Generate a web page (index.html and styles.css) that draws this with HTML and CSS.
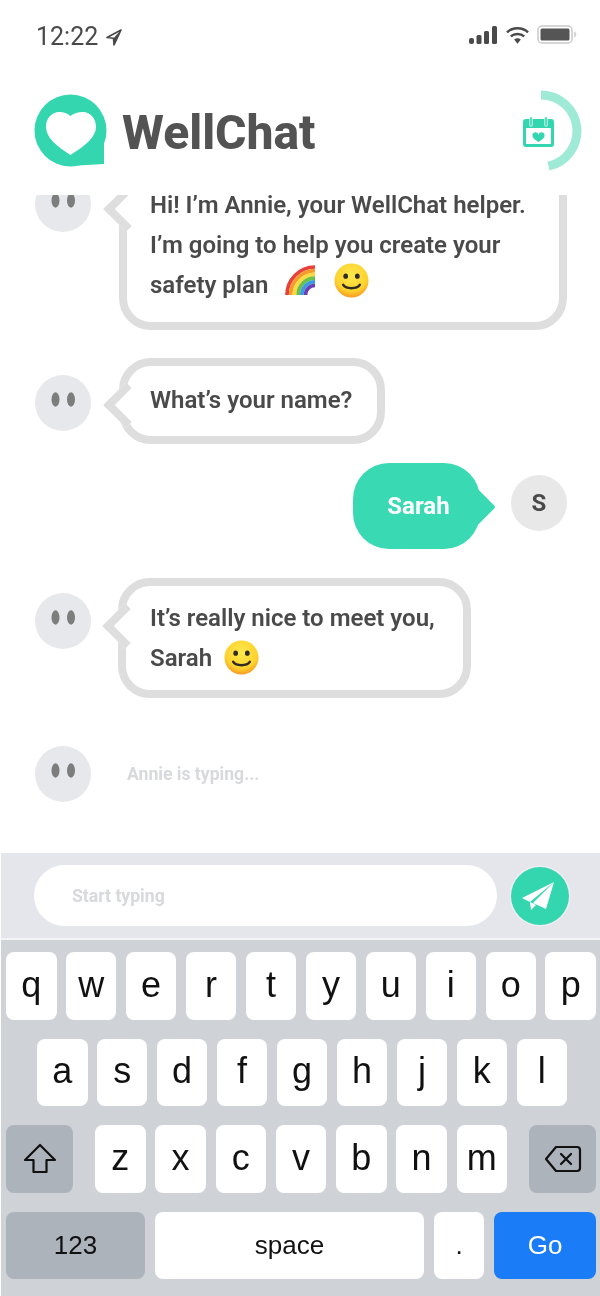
FILE: index.html
```html
<!DOCTYPE html>
<html lang="en">
<head>
<meta charset="utf-8">
<title>WellChat</title>
<link rel="stylesheet" href="styles.css">
</head>
<body>
<svg class="defs" width="0" height="0" aria-hidden="true">
  <defs>
    <radialGradient id="sg" cx="50%" cy="35%" r="65%">
      <stop offset="0" stop-color="#ffe94d"/><stop offset=".72" stop-color="#fdd22e"/><stop offset="1" stop-color="#f79a22"/>
    </radialGradient>
    <symbol id="smile" viewBox="0 0 36 36">
      <circle cx="18" cy="18" r="17.5" fill="url(#sg)"/>
      <ellipse cx="12" cy="13.5" rx="2.4" ry="2.8" fill="#2f2a22"/>
      <ellipse cx="24" cy="13.5" rx="2.4" ry="2.8" fill="#2f2a22"/>
      <path d="M9.5 22.5c3 4.500 14 4.500 17 0" fill="none" stroke="#2f2a22" stroke-width="2.600" stroke-linecap="round"/>
    </symbol>
    <symbol id="eyes" viewBox="0 0 56 56">
      <ellipse cx="20.500" cy="24.500" rx="4" ry="7.200" fill="#7d7d7d"/>
      <ellipse cx="36" cy="24.500" rx="4" ry="7.200" fill="#7d7d7d"/>
    </symbol>
  </defs>
</svg>
<main class="screen">
  <div class="status">
    <div class="time">
      <span>12:22</span>
      <svg class="loc" width="16" height="17" viewBox="0 0 16 17"><path d="M15 1 1 8.500l6.500.7L8 16z" fill="#fff" stroke="#4a4a4a" stroke-width="1.600" stroke-linejoin="round"/><path d="M15 1 7.500 9.200 8 16z" fill="#4a4a4a"/></svg>
    </div>
    <div class="status-icons">
      <svg width="28" height="18" viewBox="0 0 28 18"><g fill="#4a4a4a"><rect x="0" y="12" width="5" height="6" rx="2"/><rect x="7.500" y="9" width="5" height="9" rx="1.500"/><rect x="15" y="5" width="5" height="13" rx="1.500"/><rect x="23" y="0" width="5" height="18" rx="1.500"/></g></svg>
      <svg width="23" height="18" viewBox="0 0 24 18"><g fill="none" stroke="#4a4a4a" stroke-width="2.600"><path d="M1 6.200c6-5.600 16-5.600 22 0"/><path d="M5 10.400c3.800-3.300 10.200-3.300 14 0"/></g><path d="M8.500 13.600c2-1.500 5-1.500 7 0L12 18z" fill="#4a4a4a"/></svg>
      <svg width="40" height="19" viewBox="0 0 40 19"><rect x="1" y="1" width="34" height="17" rx="4" fill="none" stroke="#c9c9c9" stroke-width="1.500"/><rect x="3.500" y="3.500" width="29" height="12" rx="1.500" fill="#555"/><path d="M37 6.500c1.500.4 2.300 1.500 2.300 3s-.8 2.600-2.300 3z" fill="#d5d5d5"/></svg>
    </div>
  </div>

  <header class="brand">
    <div class="brand-left">
      <svg class="logo" width="74" height="74" viewBox="0 0 74 74">
        <circle cx="36.500" cy="36.500" r="36" fill="#34d6b0"/>
        <path d="M44 71.500 70 70V48z" fill="#34d6b0"/>
        <path d="M36.500 22c-3-2.500-7-4-11-4C17 18 12 25 12 33c0 10 10 19 24.500 28C51 52 62 43 62 33c0-8-5-15-13.500-15-4 0-9 1.500-12 4z" fill="#fff"/>
      </svg>
      <h1 class="title">WellChat</h1>
    </div>
    <svg class="progress" width="62" height="90" viewBox="0 0 62 90">
      <path d="M21 7a36 36 0 0 1 7.500 71.200" fill="none" stroke="#9eead6" stroke-width="9"/>
      <rect x="3" y="31" width="31" height="28" rx="3" fill="#34d6b0"/>
      <rect x="6" y="40" width="25" height="16" fill="#fff"/>
      <path d="M11 30v7M26 30v7" stroke="#c8f3e7" stroke-width="3.500" stroke-linecap="round"/>
      <path d="M11 30v7M26 30v7" stroke="#34d6b0" stroke-width="1.500" stroke-linecap="round"/>
      <path d="M18.500 54c-3-2-6-3.800-6-6.300a3 3 0 0 1 6-1 3 3 0 0 1 6 1c0 2.500-3 4.300-6 6.300z" fill="#34d6b0"/>
    </svg>
  </header>

  <section class="chat">
    <div class="log">
      <div class="row row-first">
        <div class="avatar"><svg width="56" height="56"><use href="#eyes"/></svg></div>
        <div class="bubble bubble-wide">
          Hi! I’m Annie, your WellChat helper.<br>
          I’m going to help you create your<br>
          safety plan
          <svg class="rainbow" width="30" height="31" viewBox="0 0 30 31">
            <g fill="none" stroke-width="3.700">
              <circle cx="30" cy="31" r="28" stroke="#e8403a" />
              <circle cx="30" cy="31" r="24.300" stroke="#f59a2c"/>
              <circle cx="30" cy="31" r="20.600" stroke="#fbd93f"/>
              <circle cx="30" cy="31" r="16.900" stroke="#6cc04a"/>
              <circle cx="30" cy="31" r="13.200" stroke="#3a9be0"/>
              <circle cx="30" cy="31" r="9.500" stroke="#6a3fb5"/>
            </g>
          </svg>
          <svg class="emoji emoji-after" width="35" height="35"><use href="#smile"/></svg>
        </div>
      </div>

      <div class="row row-name">
        <div class="avatar"><svg width="56" height="56"><use href="#eyes"/></svg></div>
        <div class="bubble bubble-short">What’s your name?</div>
      </div>

      <div class="row row-me">
        <div class="bubble-me">Sarah</div>
        <div class="avatar avatar-me">S</div>
      </div>

      <div class="row row-nice">
        <div class="avatar"><svg width="56" height="56"><use href="#eyes"/></svg></div>
        <div class="bubble bubble-nice">
          It’s really nice to meet you,<br>
          Sarah <svg class="emoji" width="35" height="35"><use href="#smile"/></svg>
        </div>
      </div>

      <div class="row row-typing">
        <div class="avatar"><svg width="56" height="56"><use href="#eyes"/></svg></div>
        <div class="typing">Annie is typing...</div>
      </div>
    </div>
  </section>

  <div class="composer">
    <div class="input">Start typing</div>
    <div class="send">
      <svg width="58" height="58" viewBox="0 0 58 58">
        <path d="M43 15 11 31l8 4z" fill="#fff"/>
        <path d="M43 15 22 36l13 6z" fill="#fff"/>
        <path d="M19 35l6 3-5 5z" fill="#fff"/>
      </svg>
    </div>
  </div>

  <div class="keyboard">
    <div class="keys keys-top">
      <div class="key">q</div><div class="key">w</div><div class="key">e</div><div class="key">r</div><div class="key">t</div><div class="key">y</div><div class="key">u</div><div class="key">i</div><div class="key">o</div><div class="key">p</div>
    </div>
    <div class="keys keys-mid">
      <div class="key">a</div><div class="key">s</div><div class="key">d</div><div class="key">f</div><div class="key">g</div><div class="key">h</div><div class="key">j</div><div class="key">k</div><div class="key">l</div>
    </div>
    <div class="keys keys-low">
      <div class="key key-dark key-shift">
        <svg width="34" height="32" viewBox="0 0 34 32"><path d="M17 2 2 17h8.500v12h13V17H32z" fill="none" stroke="#111" stroke-width="2.200" stroke-linejoin="round"/></svg>
      </div>
      <div class="letters">
        <div class="key">z</div><div class="key">x</div><div class="key">c</div><div class="key">v</div><div class="key">b</div><div class="key">n</div><div class="key">m</div>
      </div>
      <div class="key key-dark key-shift">
        <svg width="38" height="28" viewBox="0 0 38 28"><path d="M12 2h21a3 3 0 0 1 3 3v18a3 3 0 0 1-3 3H12L2 14z" fill="none" stroke="#111" stroke-width="2.200" stroke-linejoin="round"/><path d="M17 9l10 10M27 9 17 19" stroke="#111" stroke-width="2.200" stroke-linecap="round"/></svg>
      </div>
    </div>
    <div class="keys keys-bottom">
      <div class="key key-dark key-num">123</div>
      <div class="key key-space">space</div>
      <div class="key key-dot">.</div>
      <div class="key key-go">Go</div>
    </div>
  </div>
</main>
</body>
</html>
```

FILE: styles.css
```css
* { box-sizing: border-box; }
html, body { margin: 0; padding: 0; background: #fff; }
.defs { position: absolute; }
.screen {
  width: 600px;
  height: 1296px;
  display: flex;
  flex-direction: column;
  overflow: hidden;
  background: #fff;
  font-family: Roboto, "Liberation Sans", sans-serif;
  filter: blur(0.45px);
}

/* status bar */
.status {
  height: 72px;
  flex: none;
  display: flex;
  justify-content: space-between;
  align-items: flex-start;
  padding: 23px 23px 0 36px;
  color: #4a4a4a;
}
.time { display: flex; align-items: center; gap: 8px; font-size: 25px; line-height: 28px; }
.status-icons { display: flex; align-items: center; gap: 8.500px; padding-top: 2px; }

/* brand header */
.brand {
  height: 123px;
  flex: none;
  display: flex;
  justify-content: space-between;
  align-items: flex-start;
  padding: 20px 18px 0 34px;
  background: #fff;
  position: relative;
  z-index: 2;
}
.brand-left { display: flex; align-items: flex-start; gap: 14px; }
.logo { display: block; margin-top: 2px; }
.title {
  margin: 16px 0 0;
  font-size: 48px;
  line-height: 50px;
  font-weight: 800;
  color: #535353;
}
.progress { display: block; margin-top: -4px; }

/* chat */
.chat { flex: 1; min-height: 0; overflow: hidden; }
.log { margin-top: -30px; display: flex; flex-direction: column; }
.row { display: flex; align-items: flex-start; padding: 0 33px 0 35px; }
.avatar {
  width: 56px;
  height: 56px;
  flex: none;
  border-radius: 50%;
  background: #e7e8ec;
  margin-right: 28px;
}
.avatar svg { display: block; }
.bubble {
  position: relative;
  border: 8px solid #dedede;
  border-radius: 32px;
  background: #fff;
  font-size: 24px;
  font-weight: 600;
  line-height: 40px;
  color: #4a4a4a;
  padding: 12px 25px 12px 23px;
}
.bubble::before {
  content: "";
  position: absolute;
  left: -17px;
  top: 22px;
  width: 24px;
  height: 24px;
  background: #fff;
  border-left: 8px solid #dedede;
  border-bottom: 8px solid #dedede;
  transform: rotate(45deg);
}
.row-first .avatar { margin-top: 11px; }
.bubble-wide { width: 449px; padding-bottom: 17px; }
.bubble-wide::before { top: 20px; }
.row-name { margin-top: 28px; }
.row-name .avatar { margin-top: 17px; }
.bubble-short { padding-top: 14px; padding-bottom: 16px; }
.bubble-short::before { top: 23px; }
.row-me { margin-top: 19px; justify-content: flex-end; align-items: flex-start; }
.bubble-me {
  position: relative;
  width: 127px;
  height: 86px;
  border-radius: 36px;
  background: #38d9b3;
  color: #fff;
  font-size: 24px;
  font-weight: 700;
  display: flex;
  align-items: center;
  justify-content: center;
  padding-left: 4px;
  margin-right: 31px;
}
.bubble-me::after {
  content: "";
  position: absolute;
  right: -9px;
  top: 28px;
  width: 32px;
  height: 32px;
  background: #38d9b3;
  transform: rotate(45deg);
  border-radius: 0 2px 0 0;
}
.avatar-me {
  margin: 12px 0 0;
  background: #e8e8e8;
  color: #4a4a4a;
  font-size: 24px;
  font-weight: 700;
  display: flex;
  align-items: center;
  justify-content: center;
}
.row-nice { margin-top: 29px; }
.row-nice .avatar { margin-top: 15px; margin-right: 27px; }
.bubble-nice { padding-left: 24px; padding-right: 28px; }
.bubble-nice::before { top: 24px; }
.row-typing { margin-top: 48px; }
.typing {
  font-size: 17.600px;
  font-weight: 700;
  color: #d8d9dc;
  margin: 17px 0 0 8px;
  line-height: 22px;
}
.rainbow { vertical-align: -2px; margin: -15px 0 0 11px; }
.emoji { vertical-align: 1px; margin: -10px 0 -10px 6px; }
.emoji-after { margin-left: 13px; vertical-align: 5px; }

/* composer */
.composer {
  height: 85px;
  flex: none;
  margin-left: 1px;
  background: #e4e6ec;
  display: flex;
  align-items: flex-start;
  padding: 12px 0 0 33px;
  gap: 14px;
}
.input {
  width: 463px;
  height: 61px;
  border-radius: 31px;
  background: #fff;
  color: #d8d9dc;
  font-size: 17.600px;
  font-weight: 700;
  line-height: 63px;
  padding-left: 38px;
}
.send {
  width: 58px;
  height: 58px;
  margin-top: 2px;
  border-radius: 50%;
  background: #34d6b0;
  box-shadow: 0 0 0 1.500px #eeeef2;
}
.send svg { display: block; }

/* keyboard */
.keyboard {
  height: 358px;
  flex: none;
  margin-left: 1px;
  border-top: 2px solid #f3f4f6;
  background: #cfd3d8;
  padding: 12px 4px 0 5px;
  display: flex;
  flex-direction: column;
  gap: 19px;
  font-family: "Liberation Sans", Arial, sans-serif;
  color: #111;
}
.keys { display: flex; justify-content: space-between; }
.keys-mid { padding: 0 29px 0 31px; }
.key {
  width: 50.500px;
  height: 67.500px;
  flex: none;
  background: #fff;
  border-radius: 8px;
  display: flex;
  align-items: center;
  justify-content: center;
  font-size: 36px;
  padding-bottom: 2px;
}
.letters { display: flex; justify-content: space-between; width: 412px; }
.key-dark { background: #adb3bb; }
.key-shift { width: 67px; padding: 0; }
.key-num { width: 139px; font-size: 26px; padding: 0; }
.key-space { width: 269px; font-size: 26px; padding: 0; }
.key-dot { width: 50px; font-size: 26px; padding: 0; }
.key-go { width: 102px; font-size: 26px; padding: 0; background: #1a7cf6; color: #fff; }
```
